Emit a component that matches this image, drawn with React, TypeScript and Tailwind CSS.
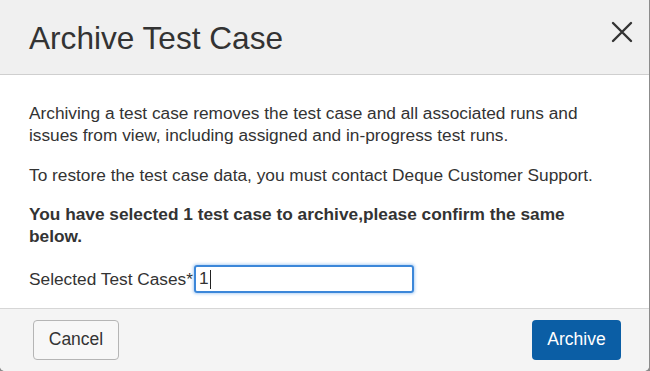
import React from "react"

export default function App() {
  return (
    <div className="w-[650px] h-[371px] bg-[#8c8c8c] font-['Liberation_Sans',Arial,sans-serif] text-[#333]">
      <div className="w-[649px] h-[371px] bg-white rounded-b-[5px] overflow-hidden flex flex-col">
        <header className="h-[75px] shrink-0 bg-[#f0f0f0] border-b border-[#cfcfcf] flex items-center justify-between pl-[29px] pr-[16px]">
          <h1 className="text-[31.6px] leading-none text-[#333] pt-[3px]">Archive Test Case</h1>
          <button aria-label="Close" className="w-[22px] h-[22px] flex items-center justify-center mb-[11px]">
            <svg width="22" height="22" viewBox="0 0 22 22" fill="none">
              <path d="M2 2 L20 20 M20 2 L2 20" stroke="#333" strokeWidth="2.4" strokeLinecap="round" />
            </svg>
          </button>
        </header>

        <section className="flex-1 pl-[29px] pr-[50px] pt-[27px] text-[17.3px] leading-[22px]">
          <p>
            Archiving a test case removes the test case and all associated runs and issues from view, including assigned and in-progress test runs.
          </p>
          <p className="mt-[18px]">To restore the test case data, you must contact Deque Customer Support.</p>
          <p className="mt-[17px] font-bold">
            You have selected 1 test case to archive,please confirm the same below.
          </p>
          <div className="mt-[18px] flex items-center">
            <label className="whitespace-nowrap">Selected Test Cases*</label>
            <div className="ml-[1px] w-[220px] h-[28px] shrink-0 border-2 border-[#3b87d9] rounded-[3px] shadow-[0_0_3px_1px_rgba(80,150,230,0.45)] flex items-center pl-[3px]">
              <span className="leading-none">1</span>
              <span className="w-px h-[19px] bg-[#222] ml-[1px]" />
            </div>
          </div>
        </section>

        <footer className="h-[63px] shrink-0 bg-[#f4f4f4] border-t border-[#d6d6d6] flex items-center justify-between pl-[33px] pr-[28px] pb-[1px]">
          <button className="w-[86px] h-[40px] rounded-[4px] border border-[#b5b5b5] bg-[#f7f7f7] text-[17.5px] text-[#333]">
            Cancel
          </button>
          <button className="w-[89px] h-[40px] rounded-[4px] bg-[#0b5ea5] text-[17.5px] text-white">
            Archive
          </button>
        </footer>
      </div>
    </div>
  )
}
